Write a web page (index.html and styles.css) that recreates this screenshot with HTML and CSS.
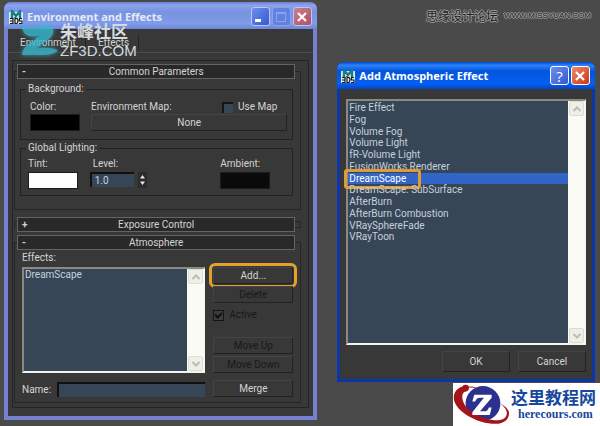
FILE: index.html
```html
<!DOCTYPE html>
<html lang="en">

<head>
    <meta charset="UTF-8">
    <meta name="viewport" content="width=device-width, initial-scale=1.0">
    <title>Environment and Effects</title>
    <link rel="stylesheet" href="styles.css">
</head>

<body>
    <!-- shared icons -->
    <svg class="sprite" aria-hidden="true">
        <symbol id="max-icon" viewBox="0 0 14 14">
            <rect y="2" width="14" height="12" fill="#dfe9ea" />
            <path d="M3 8V1l4 5 4-5v7" fill="none" stroke="#177f83" stroke-width="2.4" />
            <path d="M1 8.500h3v5H1M1 11h3M6 7v6.500h2q2-3 0-5H6M13 8.500h-2.500v2.500H13v2.500h-3" fill="none" stroke="#151b20" stroke-width="1.200" />
        </symbol>
        <symbol id="up" viewBox="0 0 10 10">
            <path d="M1.500 7L5 3.500 8.500 7" fill="none" stroke="#bdbdb2" stroke-width="2" />
        </symbol>
        <symbol id="down" viewBox="0 0 10 10">
            <path d="M1.500 3L5 6.500 8.500 3" fill="none" stroke="#bdbdb2" stroke-width="2" />
        </symbol>
        <symbol id="close" viewBox="0 0 16 16">
            <path d="M4 4l8 8M12 4l-8 8" fill="none" stroke="#fff" stroke-width="2.200" />
        </symbol>
    </svg>

    <main class="desktop">
        <section class="window window-env">
            <header class="titlebar">
                <svg class="app-icon"><use href="#max-icon" /></svg>
                <h1>Environment and Effects</h1>
                <button class="caption-btn" aria-label="Minimize"><svg viewBox="0 0 16 16"><path d="M3 11.500h6" stroke="#fff" stroke-width="3" /></svg></button>
                <button class="caption-btn dim" aria-label="Maximize"><svg viewBox="0 0 16 16"><path d="M3.500 4v8.500h9V4z" fill="none" stroke="#89a2f2" /><path d="M3 4h10" stroke="#89a2f2" stroke-width="2" /></svg></button>
                <button class="caption-btn close" aria-label="Close"><svg><use href="#close" /></svg></button>
            </header>
            <nav class="tabs">
                <button class="tab">Environment</button>
                <button class="tab">Effects</button>
            </nav>
            <div class="panel">
                <section class="rollup">
                    <button class="rollup-head"><span>-</span>Common Parameters</button>
                    <fieldset class="background">
                        <legend>Background:</legend>
                        <label for="color">Color:</label>
                        <div class="map-row">
                            <label for="map">Environment Map:</label>
                            <label class="check"><input type="checkbox">Use Map</label>
                        </div>
                        <button class="swatch black" id="color" aria-label="Color"></button>
                        <button class="btn" id="map">None</button>
                    </fieldset>
                    <fieldset class="lighting">
                        <legend>Global Lighting:</legend>
                        <div class="field">
                            <label for="tint">Tint:</label>
                            <button class="swatch white" id="tint" aria-label="Tint"></button>
                        </div>
                        <div class="field level">
                            <label for="level">Level:</label>
                            <div class="spinner">
                                <input type="text" id="level" value="1.0">
                                <button aria-label="Adjust level"><svg viewBox="0 0 9 14"><path d="M2 5.500L4.500 2 7 5.500zM2 8.500L4.500 12 7 8.500z" fill="#e8e8e8" /></svg></button>
                            </div>
                        </div>
                        <div class="field">
                            <label for="ambient">Ambient:</label>
                            <button class="swatch ambient" id="ambient" aria-label="Ambient"></button>
                        </div>
                    </fieldset>
                </section>

                <section class="rollup closed">
                    <button class="rollup-head"><span>+</span>Exposure Control</button>
                </section>

                <section class="rollup atmosphere">
                    <button class="rollup-head"><span>-</span>Atmosphere</button>
                    <p class="effects-label" id="effects-label">Effects:</p>
                    <div class="atmosphere-body">
                        <div class="listbox">
                            <ul role="listbox" aria-labelledby="effects-label">
                                <li role="option">DreamScape</li>
                            </ul>
                            <div class="scrollbar">
                                <button aria-label="Scroll up"><svg><use href="#up" /></svg></button>
                                <button aria-label="Scroll down"><svg><use href="#down" /></svg></button>
                            </div>
                        </div>
                        <div class="actions">
                            <button class="btn marked">Add...</button>
                            <button class="btn" disabled>Delete</button>
                            <label class="check disabled"><input type="checkbox" checked disabled>Active</label>
                            <button class="btn move" disabled>Move Up</button>
                            <button class="btn" disabled>Move Down</button>
                        </div>
                        <div class="name-row">
                            <label for="name">Name:</label>
                            <input type="text" id="name">
                        </div>
                        <button class="btn">Merge</button>
                    </div>
                </section>
            </div>
        </section>

        <section class="window window-add">
            <header class="titlebar">
                <svg class="app-icon"><use href="#max-icon" /></svg>
                <h2>Add Atmospheric Effect</h2>
                <button class="caption-btn" aria-label="Help">?</button>
                <button class="caption-btn close" aria-label="Close"><svg><use href="#close" /></svg></button>
            </header>
            <div class="dialog">
                <div class="listbox">
                    <ul class="effects" role="listbox" aria-label="Atmospheric effects">
                        <li role="option">Fire Effect</li>
                        <li role="option">Fog</li>
                        <li role="option">Volume Fog</li>
                        <li role="option">Volume Light</li>
                        <li role="option">fR-Volume Light</li>
                        <li role="option">FusionWorks Renderer</li>
                        <li role="option" class="selected" aria-selected="true">DreamScape</li>
                        <li role="option">DreamScape: SubSurface</li>
                        <li role="option">AfterBurn</li>
                        <li role="option">AfterBurn Combustion</li>
                        <li role="option">VRaySphereFade</li>
                        <li role="option">VRayToon</li>
                    </ul>
                    <div class="scrollbar">
                        <button aria-label="Scroll up"><svg><use href="#up" /></svg></button>
                        <button aria-label="Scroll down"><svg><use href="#down" /></svg></button>
                    </div>
                </div>
                <div class="dialog-buttons">
                    <button class="btn">OK</button>
                    <button class="btn">Cancel</button>
                </div>
            </div>
        </section>
    </main>

    <!-- watermarks -->
    <div class="mark-zf">
        <svg viewBox="0 0 40 34">
            <path d="M2 5q12 3 26-2 7 2 5 8-2 6-10 10-5 3-7 6 10-3 22 1-4 5-15 5H2q0-6 7-11 9-6 11-9-5 2-11 1-6-2-7-9z" fill="#38b9cf" />
        </svg>
        <div>
            <strong>朱峰社区</strong>
            <span>ZF3D.COM</span>
        </div>
    </div>
    <div class="mark-forum"><b>思缘设计论坛</b><span>WWW.MISSYUAN.COM</span></div>
    <div class="mark-site">
        <svg viewBox="0 0 60 43">
            <circle cx="31" cy="21" r="18" fill="#2b3190" />
            <path d="M13 3C4 4 0 10 1 17c2 12 24 25 43 25 9 0 14-5 14-11 0-4-4-7-9-10 6 5 8 9 6 13-2 4-8 5-14 4C25 35 12 27 10 17 9 12 10 9 14 8z" fill="#a3151b" />
            <circle cx="13" cy="5" r="3.500" fill="#a3151b" />
            <path d="M14 4q7-1 12 2" fill="none" stroke="#a3151b" />
            <path d="M22 12h18v3L28 29h4q4 0 5-4h3l-2 8H20v-3l12-15h-4q-4 0-5 4h-3z" fill="#fff" />
        </svg>
        <div>
            <strong>这里教程网</strong>
            <span>herecours.com</span>
        </div>
    </div>
</body>

</html>
```
FILE: styles.css
```css
* {
    box-sizing: border-box;
}

body {
    margin: 0;
    background-color: #4a4a4a;
    color: #d4d4d4;
    font-family: Roboto, "Noto Sans CJK SC", sans-serif;
    font-size: 10px;
    line-height: 12px;
}

button,
input {
    font: inherit;
    color: inherit;
    margin: 0;
    padding: 0;
}

ul,
p,
h1,
h2 {
    margin: 0;
    padding: 0;
}

svg {
    display: block;
}

.sprite {
    position: absolute;
    width: 0;
    height: 0;
}

.desktop {
    display: flex;
    align-items: flex-start;
    gap: 20px;
    padding: 2px 5px 6px 4px;
}

/* windows */
.window {
    min-width: 0;
    border-radius: 7px 7px 0 0;
    background-color: #383838;
}

.window-env {
    flex: 313 1 0;
    border: solid #7680d0;
    border-width: 0 4px 4px;
}

.window-add {
    flex: 258 1 0;
    margin-top: 60px;
    border: solid #0c36a8;
    border-width: 0 3px 3px;
}

.titlebar {
    display: flex;
    align-items: center;
    gap: 2px;
    height: 27px;
    margin: 0 -4px;
    padding: 2px 5px 0;
    border-radius: 7px 7px 0 0;
    color: #fff;
    background: linear-gradient(#6a80d4, #8ba4ec 12%, #7893e0 35%, #7f9ce8 80%, #6f84d6);
}

.window-add .titlebar {
    margin: 0 -3px;
    padding: 0 5px 0 4px;
    background: linear-gradient(#0a48cc, #2b82fa 12%, #0454dc 35%, #0560f2 80%, #0246c8);
}

.titlebar h1,
.titlebar h2 {
    flex: 1;
    padding-left: 2px;
    font-family: "Open Sans", sans-serif;
    font-size: 11px;
    font-weight: 700;
    white-space: nowrap;
}

.titlebar h1 {
    color: #e4eafa;
}

.app-icon {
    width: 14px;
    height: 14px;
}

.caption-btn {
    width: 19px;
    height: 19px;
    border: 1px solid #b6c6f6;
    border-radius: 3px;
    background: linear-gradient(135deg, #6d90ee, #3557d0);
    color: #fff;
    font-family: "Open Sans", sans-serif;
    font-size: 15px;
    line-height: 16px;
}

.caption-btn svg {
    width: 16px;
    height: 16px;
}

.caption-btn.dim {
    border-color: #8ba0ec;
    background: #6280e0;
}

.caption-btn.close {
    background: linear-gradient(135deg, #c9808e, #ad5060);
}

.window-add .caption-btn {
    border-color: #fff;
}

.window-add .close {
    background: linear-gradient(135deg, #ee8a68, #cc3518);
}

/* tabs */
.tabs {
    display: flex;
    height: 24px;
    padding: 6px 0 2px;
    border-bottom: 1px solid #4c4c4c;
}

.tab {
    padding: 0 9px 0 12px;
    border: 0;
    border-right: 1px solid #242424;
    background: none;
    line-height: 16px;
}

/* rollups */
.panel {
    margin: 7px 4px 8px;
    padding: 10px 7px 4px 1px;
    border: 1px solid #242424;
}

.rollup {
    border: 1px solid #262626;
    padding-bottom: 13px;
}

.rollup-head {
    display: flex;
    justify-content: center;
    position: relative;
    width: calc(100% - 7px);
    height: 15px;
    margin: -8px 5px 0 2px;
    border: 1px solid #646464;
    background-color: #292929;
    line-height: 13px;
}

.rollup-head span {
    position: absolute;
    left: 4px;
    font-weight: 700;
}

.rollup.closed {
    height: 7px;
    margin: 11px 0 14px;
    padding: 0;
}

.rollup.closed .rollup-head {
    margin-top: -5px;
}

.rollup.atmosphere {
    padding-bottom: 5px;
}

fieldset {
    margin: 4px 7px 0 5px;
    min-width: 0;
    border: 1px solid #222;
}

legend {
    margin-left: -4px;
    padding: 0 2px;
}

.background {
    display: grid;
    grid-template-columns: 50px 1fr;
    column-gap: 11px;
    row-gap: 1px;
    padding: 6px 5px 8px 9px;
}

.map-row {
    display: flex;
    justify-content: space-between;
    padding-right: 10px;
}

.lighting {
    display: flex;
    justify-content: space-between;
    margin-top: 2px;
    padding: 4px 22px 6px 7px;
}

.lighting legend {
    margin-left: -2px;
}

.field {
    display: flex;
    flex-direction: column;
    gap: 2px;
}

.level {
    margin-right: 62px;
}

.level label {
    padding-left: 3px;
}

.spinner {
    display: flex;
    gap: 4px;
}

.spinner input {
    width: 44px;
}

.spinner button {
    width: 9px;
    height: 16px;
    border: 0;
    background: #2c2c2c;
}

.spinner svg {
    width: 9px;
    height: 14px;
}

.swatch {
    width: 50px;
    height: 17px;
    border: 1px solid #1c1c1c;
}

.black {
    background-color: #000;
}

.white {
    background-color: #fff;
}

.ambient {
    background-color: #0a0a0a;
}

input[type="text"] {
    min-width: 0;
    height: 15px;
    padding: 0 3px;
    border: solid #101010;
    border-width: 2px 0 0 2px;
    background-color: #364657;
    color: #c3d4e8;
}

/* buttons */
.btn {
    height: 17px;
    border: 1px solid;
    border-color: #444 #222 #222 #444;
    background-color: #383838;
    line-height: 14px;
}

.btn:disabled,
.check.disabled {
    color: #191919;
}

.marked {
    outline: 3px solid #e5a02c;
    outline-offset: 1px;
    border-radius: 2px;
}

.check {
    display: flex;
    align-items: center;
    gap: 5px;
}

.check input {
    appearance: none;
    width: 11px;
    height: 11px;
    border: solid #151515;
    border-width: 2px 0 0 2px;
    background-color: #364657;
}

.check input:checked {
    border: 1px solid #151515;
    background: #3c3c3c;
}

.check input:checked::after {
    content: "";
    display: block;
    width: 3px;
    height: 5px;
    margin-left: 2px;
    border: solid #111;
    border-width: 0 2px 2px 0;
    transform: rotate(45deg);
}

/* atmosphere */
.effects-label {
    padding: 2px 7px 3px;
}

.atmosphere-body {
    display: grid;
    grid-template-columns: minmax(0, 1fr) 80px;
    gap: 7px 8px;
    padding: 0 7px;
}

.listbox {
    display: flex;
    min-height: 106px;
    border: solid;
    border-width: 2px 1px 2px 2px;
    border-color: #8a8a82 #f4f4ee #f4f4ee #8a8a82;
    background-color: #364657;
    color: #c6d0da;
}

.listbox ul {
    flex: 1;
    list-style: none;
}

.listbox li {
    position: relative;
    padding-left: 1px;
    white-space: nowrap;
}

.scrollbar {
    display: flex;
    flex-direction: column;
    justify-content: space-between;
    width: 17px;
    padding: 0 1px;
    background-color: #fbfbf6;
}

.scrollbar button {
    display: grid;
    place-items: center;
    height: 15px;
    border: 1px solid #dcdcd2;
    border-radius: 2px;
    background-color: #efefe8;
}

.scrollbar svg {
    width: 10px;
    height: 10px;
}

.actions {
    display: flex;
    flex-direction: column;
    gap: 2px;
}

.actions .check {
    margin-top: 4px;
}

.actions .move {
    margin-top: auto;
}

.name-row {
    display: flex;
    align-items: center;
    gap: 6px;
    padding-top: 2px;
}

.name-row input {
    flex: 1;
}

/* add effect dialog */
.dialog {
    padding: 10px 6px 7px;
}

.dialog .listbox {
    height: 246px;
}

.listbox .effects {
    display: grid;
    grid-auto-rows: 1fr;
    height: 142px;
    padding-top: 1px;
}

.effects li {
    line-height: 11px;
}

.listbox .selected {
    background-color: #3166c8;
    color: #fff;
}

.selected::after {
    content: "";
    position: absolute;
    left: -4px;
    top: -4px;
    width: 71px;
    height: 14px;
    border: 3px solid #dd9c38;
    border-radius: 3px;
}

.dialog-buttons {
    display: flex;
    justify-content: flex-end;
    gap: 8px;
    margin-top: 6px;
}

.dialog-buttons .btn {
    width: 68px;
    height: 21px;
}

/* watermarks */
.mark-zf {
    position: absolute;
    top: 22px;
    left: 20px;
    display: flex;
    color: #d4dade;
    pointer-events: none;
}

.mark-zf svg {
    width: 40px;
    height: 34px;
    opacity: 0.8;
    filter: drop-shadow(0 0 2px #38b9cf);
}

.mark-zf strong,
.mark-zf span {
    display: block;
    white-space: nowrap;
}

.mark-zf strong {
    font: 700 17px/18px "Noto Sans CJK SC", sans-serif;
}

.mark-zf span {
    font: 400 15px/22px "Liberation Sans", sans-serif;
}

.mark-forum {
    position: absolute;
    top: 8px;
    right: 9px;
    display: flex;
    align-items: center;
    gap: 6px;
    color: #1c1c1c;
    text-shadow: 1px 0 #a0a0a0, -1px 0 #a0a0a0, 0 1px #a0a0a0, 0 -1px #a0a0a0;
}

.mark-forum b {
    font: 400 12px/16px "Noto Sans CJK SC", sans-serif;
}

.mark-forum span {
    font: 400 8px/16px "Liberation Sans", sans-serif;
}

.mark-site {
    position: absolute;
    top: 383px;
    right: 0;
    display: flex;
    align-items: flex-start;
    width: 147px;
    height: 43px;
    background-color: #fff;
    color: #17489c;
}

.mark-site svg {
    width: 58px;
    height: 42px;
}

.mark-site div {
    padding-top: 4px;
}

.mark-site strong,
.mark-site span {
    display: block;
    white-space: nowrap;
}

.mark-site strong {
    font: 700 17px/20px "Noto Sans CJK SC", sans-serif;
}

.mark-site span {
    padding-left: 7px;
    font: 700 12px/14px "Liberation Serif", serif;
}
```
